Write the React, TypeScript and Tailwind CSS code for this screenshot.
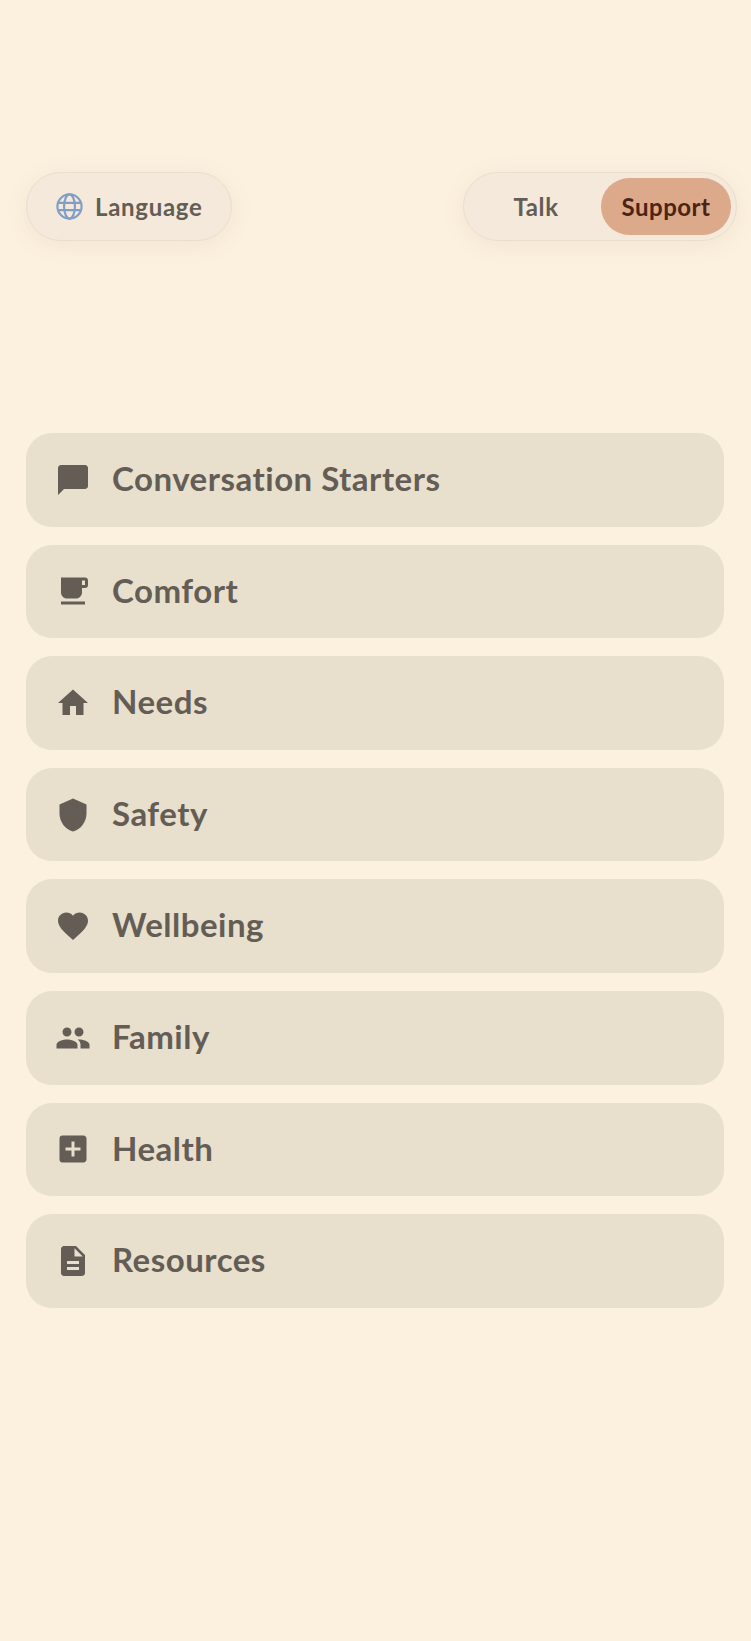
import {
  MdChatBubble,
  MdLocalCafe,
  MdHome,
  MdFavorite,
  MdPeople,
  MdAddBox,
  MdDescription,
} from "react-icons/md";

function ShieldIcon({ size }: { size: number }) {
  return (
    <svg width={size} height={size} viewBox="0 0 24 24" fill="currentColor">
      <path d="M12 1L3 5v6c0 5.55 3.84 10.74 9 12 5.16-1.26 9-6.45 9-12V5l-9-4z" />
    </svg>
  );
}

const categories = [
  { label: "Conversation Starters", Icon: MdChatBubble },
  { label: "Comfort", Icon: MdLocalCafe },
  { label: "Needs", Icon: MdHome },
  { label: "Safety", Icon: ShieldIcon },
  { label: "Wellbeing", Icon: MdFavorite },
  { label: "Family", Icon: MdPeople },
  { label: "Health", Icon: MdAddBox },
  { label: "Resources", Icon: MdDescription },
];

function GlobeIcon() {
  return (
    <svg
      className="h-[29px] w-[29px] text-[#7f9fc6]"
      viewBox="0 0 24 24"
      fill="none"
      stroke="currentColor"
      strokeWidth="1.8"
    >
      <circle cx="12" cy="12" r="10" />
      <ellipse cx="12" cy="12" rx="4.5" ry="10" />
      <path d="M3 9h18M3 15h18" />
    </svg>
  );
}

function App() {
  return (
    <div className="min-h-[1641px] bg-[#fcf1df] pt-[172px] font-['Lato','Noto_Sans',sans-serif] text-[#635d56]">
      <div className="flex items-start justify-between pl-[26px] pr-[14px]">
        <button className="flex h-[69px] w-[206px] items-center gap-[11px] rounded-full border border-[#e8dfcd] bg-[#f4e9da] pl-[28px] shadow-[0_4px_24px_rgba(120,90,50,0.08)]">
          <GlobeIcon />
          <span className="text-[24px] font-bold tracking-[0.7px]">Language</span>
        </button>
        <div className="flex h-[69px] w-[274px] items-center justify-end rounded-full border border-[#e8dfcd] bg-[#f4e9da] pr-[5px] shadow-[0_4px_24px_rgba(120,90,50,0.08)]">
          <button className="w-[130px] text-[24px] font-bold tracking-[0.6px]">Talk</button>
          <button className="h-[57px] w-[130px] rounded-full bg-[#dca98a] text-[24px] font-bold tracking-[0.5px] text-[#4a2516]">
            Support
          </button>
        </div>
      </div>

      <div className="mt-[192px] flex flex-col gap-[18px] pl-[26px] pr-[27px]">
        {categories.map(({ label, Icon }) => (
          <button
            key={label}
            className="flex h-[93.6px] items-center gap-[21px] rounded-[26px] bg-[#e8dfcd] pl-[29px] text-left"
          >
            <Icon size={36} />
            <span className="pb-[2px] text-[33px] font-bold tracking-[0.5px]">{label}</span>
          </button>
        ))}
      </div>
    </div>
  );
}

export default App;
